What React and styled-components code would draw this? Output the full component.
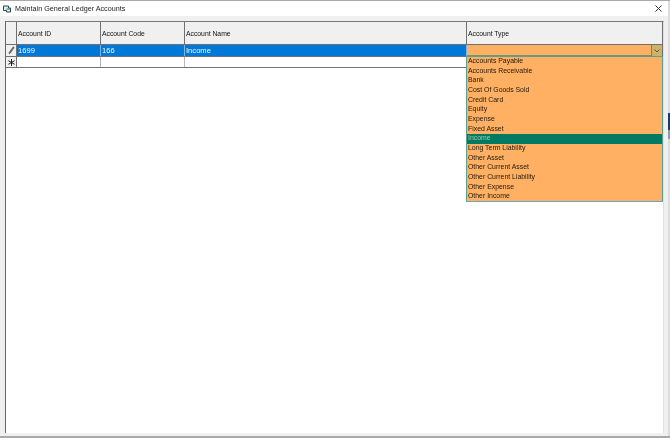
import React from 'react';
import styled, { createGlobalStyle } from 'styled-components';

const GlobalStyle = createGlobalStyle`
  html, body { margin: 0; padding: 0; background: #e9e9e9; }
  body { font-family: "Liberation Sans", Arial, sans-serif; }
`;

const accountTypes = [
  'Accounts Payable', 'Accounts Receivable', 'Bank', 'Cost Of Goods Sold', 'Credit Card',
  'Equity', 'Expense', 'Fixed Asset', 'Income', 'Long Term Liability', 'Other Asset',
  'Other Current Asset', 'Other Current Liability', 'Other Expense', 'Other Income',
];

const columns = [
  { title: 'Account ID', width: 84, value: '1699' },
  { title: 'Account Code', width: 84, value: '166' },
  { title: 'Account Name', width: 282, value: 'Income' },
];

const Screen = styled.div`
  position: relative;
  width: 670px;
  height: 438px;
  display: flex;
  flex-direction: column;
  background: #a9a9a9;
  overflow: hidden;
  filter: blur(0.45px);
`;

const BackWindowEdge = styled.div`
  position: absolute;
  right: 0;
  top: 113px;
  width: 2px;
  height: 26px;
  background: linear-gradient(#1f3a63 0 17px, #8d97ad 17px);
`;

const Window = styled.div`
  height: 435px;
  margin-top: 1px;
  display: flex;
  flex-direction: column;
  background: #f0f0f0;
  border-right: 2px solid #dcdcdc;
  box-sizing: border-box;
`;

const TitleBar = styled.div`
  height: 15px;
  flex: none;
  display: flex;
  align-items: center;
  gap: 4px;
  padding: 0 6px 0 3px;
  background: #fff;
`;

const Title = styled.span`
  flex: 1;
  font-size: 7.2px;
  color: #222;
`;

const Body = styled.div`
  flex: 1;
  display: flex;
  padding: 5px 4px 3px 5px;
  min-height: 0;
`;

const Grid = styled.div`
  position: relative;
  flex: 1;
  background: #fff;
  border-left: 1px solid #666;
  border-top: 1px solid #777;
  border-right: 1px solid #e0e0e0;
`;

const Row = styled.div`
  display: flex;
  height: ${p => p.$height}px;
  box-sizing: border-box;
  border-bottom: 1px solid #707070;
  border-right: 1px solid #707070;
`;

const RowHeader = styled.div`
  width: 10px;
  flex: none;
  display: flex;
  align-items: center;
  justify-content: center;
  background: #f0f0f0;
  border-right: 1px solid #707070;
`;

const HeaderCell = styled.div`
  width: ${p => p.$width}px;
  flex: ${p => (p.$grow ? 1 : 'none')};
  box-sizing: border-box;
  display: flex;
  align-items: center;
  padding-left: 1px;
  background: #f0f0f0;
  border-right: ${p => (p.$grow ? 0 : '1px solid #707070')};
  font-size: 6.8px;
  color: #111;
`;

const Cell = styled.div`
  width: ${p => p.$width}px;
  flex: none;
  box-sizing: border-box;
  display: flex;
  align-items: center;
  padding-left: 1px;
  background: ${p => (p.$selected ? '#0078d7' : '#fff')};
  border-right: 1px solid ${p => (p.$selected ? '#7fb4e0' : '#b5b5b5')};
  font-size: 7.6px;
  color: ${p => (p.$selected ? '#f2f8fd' : '#222')};
`;

const ComboCell = styled.div`
  flex: 1;
  display: flex;
  justify-content: flex-end;
  background: #ffb062;
  box-shadow: inset 0 -1px 0 #6d9a78;
`;

const ComboButton = styled.div`
  width: 10px;
  display: flex;
  align-items: center;
  justify-content: center;
  background: #cdb26a;
  border-left: 1px solid #80806a;
`;

const EmptyCell = styled.div`
  flex: 1;
  background: #fff;
`;

const Dropdown = styled.ul`
  position: absolute;
  left: 460px;
  top: 34px;
  width: 197px;
  height: 146px;
  margin: 0;
  padding: 0;
  box-sizing: border-box;
  list-style: none;
  background: #ffb062;
  border: 1px solid #5f9f8f;
  border-bottom-color: #68a5c4;
`;

const Option = styled.li`
  height: 9.66px;
  line-height: 8.8px;
  padding-left: 1px;
  font-size: 6.9px;
  white-space: nowrap;
  color: ${p => (p.$active ? '#9dc9a8' : '#1f180e')};
  background: ${p => (p.$active ? '#007a63' : 'transparent')};
`;

const WindowIcon = () => (
  <svg width="8" height="8" viewBox="0 0 8 8">
    <path d="M.5 1h5v2h2v4h-4V5.500h-3z" fill="#e6eceb" stroke="#27474c" strokeWidth="1" />
    <path d="M3.500 4h4" stroke="#1d7a70" strokeWidth="1" />
  </svg>
);

const CloseIcon = () => (
  <svg width="7" height="7" viewBox="0 0 7 7">
    <path d="M.5.5l6 6M6.500.5l-6 6" stroke="#333" strokeWidth="1" />
  </svg>
);

const PencilIcon = () => (
  <svg width="7" height="9" viewBox="0 0 7 9">
    <path d="M5.200.8L6.200 1.600 2.400 7 1 8l.3-1.800z" fill="#666" stroke="#444" strokeWidth=".5" />
  </svg>
);

const StarIcon = () => (
  <svg width="7" height="7" viewBox="0 0 7 7">
    <path d="M3.500 0v7M.4 1.700l6.200 3.600M6.600 1.700L.4 5.300" stroke="#222" strokeWidth="1" />
  </svg>
);

const ChevronIcon = () => (
  <svg width="6" height="4" viewBox="0 0 6 4">
    <path d="M.5.5L3 3 5.500.5" fill="none" stroke="#5d5a3c" strokeWidth="1" />
  </svg>
);

export default function App() {
  return (
    <Screen>
      <GlobalStyle />
      <BackWindowEdge />
      <Window>
        <TitleBar>
          <WindowIcon />
          <Title>Maintain General Ledger Accounts</Title>
          <CloseIcon />
        </TitleBar>
        <Body>
          <Grid>
            <Row $height={23}>
              <RowHeader />
              {columns.map(c => (
                <HeaderCell key={c.title} $width={c.width}>{c.title}</HeaderCell>
              ))}
              <HeaderCell $grow>Account Type</HeaderCell>
            </Row>
            <Row $height={12}>
              <RowHeader><PencilIcon /></RowHeader>
              {columns.map(c => (
                <Cell key={c.title} $width={c.width} $selected>{c.value}</Cell>
              ))}
              <ComboCell>
                <ComboButton><ChevronIcon /></ComboButton>
              </ComboCell>
            </Row>
            <Row $height={11}>
              <RowHeader><StarIcon /></RowHeader>
              {columns.map(c => (
                <Cell key={c.title} $width={c.width} />
              ))}
              <EmptyCell />
            </Row>
            <Dropdown>
              {accountTypes.map(t => (
                <Option key={t} $active={t === 'Income'}>{t}</Option>
              ))}
            </Dropdown>
          </Grid>
        </Body>
      </Window>
    </Screen>
  );
}
